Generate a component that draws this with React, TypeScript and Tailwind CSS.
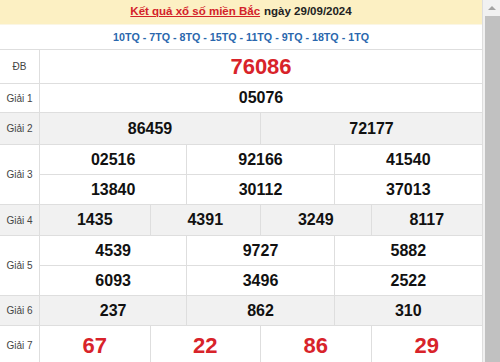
import React from "react";

type Prize = {
  label: string;
  rows: string[][];
  heights: number[];
  shaded?: boolean;
  red?: boolean;
};

const prizes: Prize[] = [
  { label: "ĐB", rows: [["76086"]], heights: [34], red: true },
  { label: "Giải 1", rows: [["05076"]], heights: [29] },
  { label: "Giải 2", rows: [["86459", "72177"]], heights: [32], shaded: true },
  {
    label: "Giải 3",
    rows: [
      ["02516", "92166", "41540"],
      ["13840", "30112", "37013"],
    ],
    heights: [30, 30],
  },
  { label: "Giải 4", rows: [["1435", "4391", "3249", "8117"]], heights: [31], shaded: true },
  {
    label: "Giải 5",
    rows: [
      ["4539", "9727", "5882"],
      ["6093", "3496", "2522"],
    ],
    heights: [30, 30],
  },
  { label: "Giải 6", rows: [["237", "862", "310"]], heights: [30], shaded: true },
  { label: "Giải 7", rows: [["67", "22", "86", "29"]], heights: [40], red: true },
];

const gridCols: Record<number, string> = {
  1: "grid-cols-1",
  2: "grid-cols-2",
  3: "grid-cols-3",
  4: "grid-cols-4",
};

function PrizeRow({ prize }: { prize: Prize }) {
  const bg = prize.shaded ? "bg-[#f1f1f1]" : "bg-white";
  const numClass = prize.red
    ? "text-[22px] font-bold text-[#d8232a]"
    : "text-[16px] font-bold text-[#111]";

  return (
    <div className={`flex ${bg} border-b border-[#dedede]`}>
      <div className="w-[40px] shrink-0 flex items-center justify-center border-r border-[#dedede] text-[10px] text-[#444]">
        {prize.label}
      </div>
      <div className="flex-1 flex flex-col">
        {prize.rows.map((cells, ri) => (
          <div
            key={ri}
            className={`grid ${gridCols[cells.length]} ${
              ri < prize.rows.length - 1 ? "border-b border-[#dedede]" : ""
            }`}
            style={{ height: prize.heights[ri] - (ri === prize.rows.length - 1 ? 1 : 0) }}
          >
            {cells.map((n, ci) => (
              <div
                key={ci}
                className={`flex items-center justify-center ${numClass} ${
                  ci < cells.length - 1 ? "border-r border-[#dedede]" : ""
                }`}
              >
                {n}
              </div>
            ))}
          </div>
        ))}
      </div>
    </div>
  );
}

export default function App() {
  return (
    <div className="w-[500px] h-[362px] overflow-hidden flex bg-white font-['Liberation_Sans',Arial,sans-serif]">
      <div className="flex-1 flex flex-col border-r border-[#dedede]">
        <div className="h-[25px] shrink-0 bg-[#fcf0c3] border-b border-[#fbf6e4] flex items-center justify-center text-[11.5px]">
          <a href="#" className="text-[#d3222a] underline font-bold">
            Kết quả xổ số miền Bắc
          </a>
          <span className="ml-1 text-[#222] font-bold">ngày 29/09/2024</span>
        </div>
        <div className="h-[25px] shrink-0 flex items-center justify-center border-b border-[#dedede] text-[10.7px] font-bold text-[#2a67ad]">
          10TQ - 7TQ - 8TQ - 15TQ - 11TQ - 9TQ - 18TQ - 1TQ
        </div>
        {prizes.map((p) => (
          <PrizeRow key={p.label} prize={p} />
        ))}
      </div>
      <div className="w-[17px] shrink-0 flex flex-col bg-[#f1f1f1]">
        <div className="h-[16px] flex items-center justify-center">
          <div className="w-0 h-0 border-l-[4px] border-r-[4px] border-b-[4px] border-l-transparent border-r-transparent border-b-[#a3a3a3]" />
        </div>
        <div className="flex-1 ml-[2px] bg-[#c1c1c1]" />
      </div>
    </div>
  );
}
